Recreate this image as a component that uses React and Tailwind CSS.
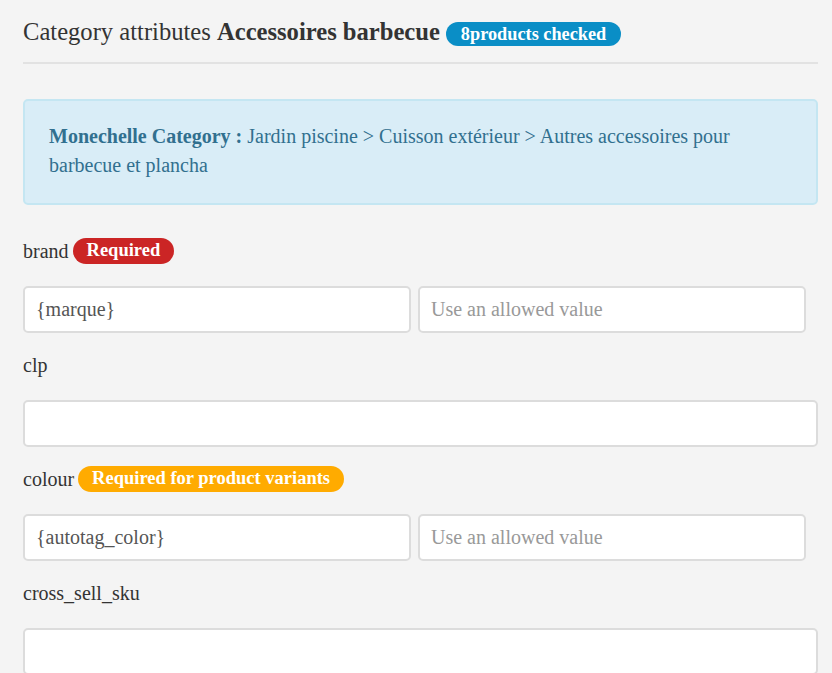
import React from 'react';

const Badge = ({ color, children }) => (
    <span className={`inline-flex items-center h-[26px] px-[14px] rounded-full text-[18.5px] font-bold text-white leading-none ${color}`}>
        {children}
    </span>
);

const Field = ({ label, badge, value, placeholder, split }) => (
    <div className="mt-[17px] first:mt-0">
        <div className="flex items-center gap-[4px] h-[29px] text-[20px] text-[#333]">
            <span>{label}</span>
            {badge}
        </div>
        {split ? (
            <div className="flex gap-[7px] mt-[21px]">
                <input
                    defaultValue={value}
                    className="w-[388px] h-[47px] px-[11px] bg-white border-2 border-[#dcdcdc] rounded-[5px] text-[20px] text-[#555] outline-none"
                />
                <input
                    placeholder={placeholder}
                    className="w-[388px] h-[47px] px-[11px] bg-white border-2 border-[#dcdcdc] rounded-[5px] text-[20px] text-[#555] placeholder:text-[#999] outline-none"
                />
            </div>
        ) : (
            <input className="block w-full mt-[21px] h-[47px] px-[11px] bg-white border-2 border-[#dcdcdc] rounded-[5px] text-[20px] outline-none" />
        )}
    </div>
);

const App = () => {
    return (
        <div className="min-h-screen bg-[#f4f4f4] pl-[23px] pr-[14px] pt-[18px] pb-10 overflow-hidden font-['Liberation_Serif','DejaVu_Serif',serif]">
            <header className="flex items-center gap-[6px] h-[28px] text-[24.6px] text-[#333]">
                <span>Category attributes <b>Accessoires barbecue</b></span>
                <span className="inline-flex items-center h-[24px] mt-[4px] px-[15px] rounded-full bg-[#0a8ec6] text-white text-[18.3px] font-bold leading-none">8products checked</span>
            </header>
            <hr className="mt-[16px] border-t-2 border-[#e2e2e2]" />

            {/* CATEGORIA */}
            <div className="mt-[35px] h-[106px] px-[24px] pt-[21px] bg-[#d9edf7] border-2 border-[#c4e6f2] rounded-[5px] text-[20px] leading-[29px] text-[#31708f]">
                <b>Monechelle Category :</b> Jardin piscine &gt; Cuisson extérieur &gt; Autres accessoires pour barbecue et plancha
            </div>

            {/* ATRIBUTOS */}
            <div className="mt-[31px]">
                <Field label="brand" badge={<Badge color="bg-[#cb2525]">Required</Badge>} value="{marque}" placeholder="Use an allowed value" split />
                <Field label="clp" />
                <Field label="colour" badge={<Badge color="bg-[#ffab00]">Required for product variants</Badge>} value="{autotag_color}" placeholder="Use an allowed value" split />
                <Field label="cross_sell_sku" />
            </div>
        </div>
    );
};

export default App;
